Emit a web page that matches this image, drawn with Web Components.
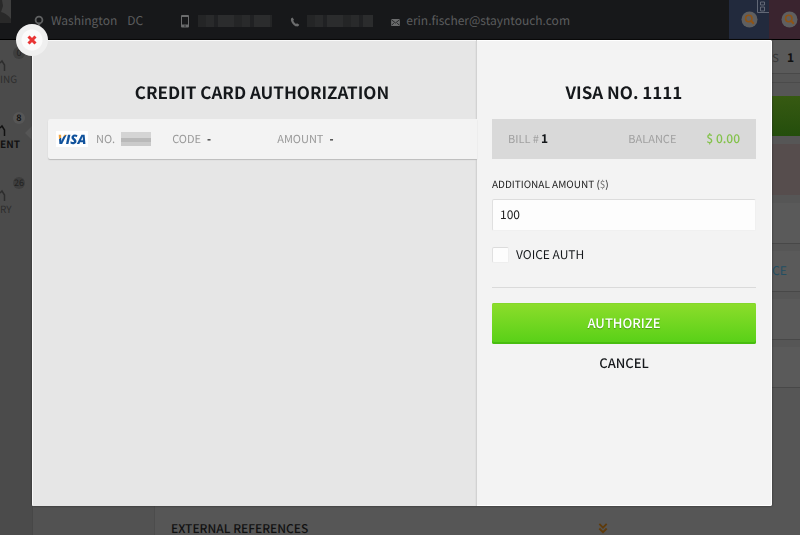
<!DOCTYPE html>
<html lang="en">
<head>
<meta charset="utf-8">
<meta name="viewport" content="width=device-width, initial-scale=1">
<title>Credit Card Authorization</title>
<style>
  html, body {height: 100%; margin: 0;}
  body {
    overflow: hidden;
    background: #565656;
    color: #15181b;
    font: 12px/16px "Noto Sans CJK JP", "Open Sans", sans-serif;
    text-rendering: geometricPrecision;
  }
</style>
</head>
<body>
<stay-app>
  <guest-bar slot="header" city="Washington" state="DC" email="erin.fischer@stayntouch.com"></guest-bar>
  <nav-item slot="nav" count="0">ING</nav-item>
  <nav-item slot="nav" count="8" active>ENT</nav-item>
  <nav-item slot="nav" count="26">RY</nav-item>
  <section-heading slot="content">EXTERNAL REFERENCES</section-heading>
  <info-rail slot="rail"></info-rail>
</stay-app>

<auth-modal>
  <span slot="title">CREDIT CARD AUTHORIZATION</span>
  <card-row slot="cards" code="-" amount="-"></card-row>
  <span slot="card">VISA NO. 1111</span>
  <bill-summary slot="form" bill="1" balance="$ 0.00"></bill-summary>
  <auth-form slot="form" amount="100"></auth-form>
</auth-modal>

<script>
// page frame behind the modal
window.customElements.define('stay-app', class extends HTMLElement {
  constructor(){
    super();
    const shadow = this.attachShadow({mode: 'open'});
    shadow.innerHTML = `
    <style>
      :host {display: flex; flex-direction: column; height: 100vh;}
      .body {
        flex: 1;
        display: grid;
        grid-template-columns: 32px 123px 1fr 28px;
        min-height: 0;
      }
      nav {background: #4b4b4b; padding-top: 4px;}
      .sub {background: #525252; border-right: 1px solid #4c4c4c; border-left: 1px solid #474747;}
      main {display: flex; flex-direction: column; justify-content: flex-end; padding: 0 16px;}
      aside {min-width: 0;}
    </style>
    <slot name="header"></slot>
    <div class="body">
      <nav><slot name="nav"></slot></nav>
      <div class="sub"></div>
      <main><slot name="content"></slot></main>
      <aside><slot name="rail"></slot></aside>
    </div>
    `;
  }
});

window.customElements.define('guest-bar', class extends HTMLElement {
  constructor(){
    super();
    const shadow = this.attachShadow({mode: 'open'});
    shadow.innerHTML = `
    <style>
      :host {
        display: flex;
        height: 39px;
        background: #17181a;
        border-bottom: 1px solid #000;
        color: #5c5d5e;
      }
      .avatar {width: 11px; height: 23px; background: #3f3f3f; flex: none;}
      .info {flex: 1; display: flex; align-items: center; padding: 2px 0 0 23px;}
      .info svg {flex: none;}
      .pin {margin-right: 7px;}
      .state {margin: 0 38px 0 10px;}
      .mobile {margin: 2px 9px 0 0;}
      .handset {margin: 2px 7px 0 18px;}
      .mail {margin: 3px 6px 0 18px;}
      a {color: inherit; text-decoration: none;}
      .masked {
        height: 12px;
        background: repeating-linear-gradient(90deg, #242526 0 8px, #292a2b 8px 16px, #202123 16px 20px, #2b2c2d 20px 36px);
      }
      .m1 {width: 74px;}
      .m2 {width: 66px;}
      .tab {
        width: 40px;
        display: flex;
        justify-content: center;
        border: 0;
        padding: 11px 0 0;
        background: #222a3d;
        align-items: flex-start;
        position: relative;
        overflow: hidden;
      }
      .tab.red {width: 31px; padding-left: 10px; background: #3a242f;}
      .glyph {position: absolute; right: 0; top: 0;}
    </style>
    <div class="avatar"><svg width="11" height="23"><path d="M0 0h2l1 6-2 6c4 1 8 4 10 7v4H0z" fill="#292929"/></svg></div>
    <div class="info">
      <svg class="pin" width="10" height="12" viewBox="0 0 10 12"><circle cx="5" cy="5" r="3.4" fill="none" stroke="#606162" stroke-width="1.8"/><path d="M3 8h4l-2 4z" fill="#606162"/></svg>
      <span>${this.getAttribute('city')}</span>
      <span class="state">${this.getAttribute('state')}</span>
      <svg class="mobile" width="8" height="13" viewBox="0 0 8 13"><path fill="#6b6c6d" fill-rule="evenodd" d="M1 0h6q1 0 1 1v10.500q0 1-1 1H1q-1 0-1-1V1q0-1 1-1zM1 2v7.500h6V2zM3.300 10.500v1h1.400v-1z"/></svg>
      <span class="masked m1"></span>
      <svg class="handset" width="10" height="10" viewBox="0 0 10 10"><path d="M2.500.5L1 1.500C.3 3.500 2 6.500 4 8.200c1.800 1.400 3.600 1.400 4.500.8L9.300 7.800 7 6.300 6 7.100C4.800 6.400 3.700 5 3.300 3.600L4 2.800z" fill="#6b6c6d"/></svg>
      <span class="masked m2"></span>
      <svg class="mail" width="9" height="7" viewBox="0 0 10 8"><rect width="10" height="8" rx="1" fill="#6b6c6d"/><path d="M.5 1L5 4.500 9.500 1M.7 7l2.600-2.600M9.300 7L6.700 4.400" fill="none" stroke="#17181a" stroke-width=".9"/></svg>
      <a href="mailto:${this.getAttribute('email')}">${this.getAttribute('email')}</a>
    </div>
    <button class="tab" aria-label="Search reservations">
      ${this.lens()}
      <svg class="glyph" width="12" height="13"><path d="M.5 0v12.500H12M3.500 2h4v3h-4zM3.500 7h4v4h-4z" fill="none" stroke="#626876"/></svg>
    </button>
    <button class="tab red" aria-label="Search guests">${this.lens()}</button>
    `;
  }
  lens() {
    return `<svg width="17" height="17" viewBox="0 0 17 17"><circle cx="8.500" cy="8.500" r="8" fill="#5f5f60"/><circle cx="7.800" cy="7.500" r="3.200" fill="none" stroke="#8f5314" stroke-width="1.500"/><path d="M10 9.800l2.800 2.900" stroke="#8f5314" stroke-width="2"/></svg>`;
  }
});

window.customElements.define('nav-item', class extends HTMLElement {
  constructor(){
    super();
    const active = this.hasAttribute('active');
    const shadow = this.attachShadow({mode: 'open'});
    shadow.innerHTML = `
    <style>
      :host {display: block; height: 65px; position: relative; color: ${active ? '#111' : '#2d2d2d'};}
      a {display: flex; flex-direction: column; color: inherit; text-decoration: none; font-size: 10px; font-weight: ${active ? 700 : 400};}
      .badge {
        align-self: flex-end;
        width: 12px;
        height: 12px;
        margin: 3px 7px 0 0;
        border-radius: 50%;
        background: ${active ? '#565656' : '#3e3e3e'};
        color: ${active ? '#111' : '#222'};
        font-size: 9px;
        line-height: 12px;
        text-align: center;
      }
      svg {display: block;}
      .label {line-height: 14px;}
      .arrow {
        display: ${active ? 'block' : 'none'};
        position: absolute;
        right: 0;
        top: 17px;
        border: 7px solid transparent;
        border-left: 0;
        border-right-color: #565656;
      }
    </style>
    <a href="#">
      <span class="badge">${this.getAttribute('count')}</span>
      <svg width="8" height="13" viewBox="0 0 8 13"><path d="M0 4l2-2 2.500 4v6M0 4" fill="none" stroke="currentColor" stroke-width="1.500"/></svg>
      <span class="label"><slot></slot></span>
    </a>
    <span class="arrow"></span>
    `;
  }
});

window.customElements.define('section-heading', class extends HTMLElement {
  constructor(){
    super();
    const shadow = this.attachShadow({mode: 'open'});
    shadow.innerHTML = `
    <style>
      :host {display: grid; grid-template-columns: 73fr 27fr; align-items: start; color: #111;}
      h2 {margin: 0; font-size: 12px; line-height: 12px; font-weight: 500;}
      button {border: 0; padding: 0; background: none; justify-self: start;}
      svg {display: block;}
    </style>
    <h2><slot></slot></h2>
    <button aria-label="Expand"><svg width="10" height="11" viewBox="0 0 10 12"><path d="M1 1l4 4 4-4M1 6l4 4 4-4" fill="none" stroke="#5f3b0b" stroke-width="2"/></svg></button>
    `;
  }
});

window.customElements.define('info-rail', class extends HTMLElement {
  constructor(){
    super();
    const shadow = this.attachShadow({mode: 'open'});
    shadow.innerHTML = `
    <style>
      :host {display: flex; flex-direction: column;}
      .count {
        display: flex;
        justify-content: flex-end;
        align-items: center;
        gap: 8px;
        height: 31px;
        padding: 2px 6px 0 0;
        border-bottom: 1px solid #494949;
        background: #5a5a5a;
        color: #373737;
      }
      .count span {font-size: 11px;}
      .count b {color: #111;}
      .strip {height: 8px; border-bottom: 1px solid #4b4b4b;}
      .action {height: 40px; margin-top: 13px; border: 0; padding: 0; background: linear-gradient(#375a12, #244e0c);}
      .alert {height: 51px; margin: 8px 0; background: #564d4d;}
      .row {height: 40px; margin-bottom: 7px; border-bottom: 1px solid #484848; background: #5a5a5a; display: flex; align-items: center;}
      a {color: #234f63; text-decoration: none;}
    </style>
    <div class="count"><span>RS</span><b>1</b></div>
    <div class="strip"></div>
    <button class="action" aria-label="Check in"></button>
    <div class="alert"></div>
    <div class="row"></div>
    <div class="row"><a href="#">CE</a></div>
    <div class="row"></div>
    <div class="row"></div>
    `;
  }
});

window.customElements.define('auth-modal', class extends HTMLElement {
  constructor(){
    super();
    const self = this;
    const shadow = this.attachShadow({mode: 'open'});
    shadow.innerHTML = `
    <style>
      :host {
        display: flex;
        position: fixed;
        z-index: 1;
        inset: 0;
        padding: 40px 28px 29px 32px;
      }
      .sheet {
        flex: 1;
        display: grid;
        grid-template-columns: 3fr 2fr;
        position: relative;
        border-radius: 2px;
        background: #f3f3f3;
        box-shadow: 0 0 2px #222, inset 0 0 0 1px #fff;
      }
      .cards, .form {padding: 39px 16px 0; min-width: 0;}
      .cards {
        padding-right: 0;
        border-radius: 2px 0 0 2px;
        background: #e6e6e6;
        box-shadow: inset 1px 1px #f8f8f8, inset -1px 0 #e0e0e0, 1px 0 #d2d2d2;
      }
      h1 {
        margin: 0 0 14px;
        font-size: 17px;
        line-height: 26px;
        font-weight: 700;
        text-align: center;
      }
      .close {
        position: absolute;
        left: -16px;
        top: -16px;
        width: 32px;
        height: 32px;
        border: 0;
        padding: 0;
        border-radius: 50%;
        background: radial-gradient(#fbfbfb 10px, #f0f0f0 11px);
        cursor: pointer;
      }
      .close svg {display: block; margin: auto;}
    </style>
    <div class="sheet" role="dialog" aria-modal="true">
      <section class="cards">
        <h1><slot name="title"></slot></h1>
        <slot name="cards"></slot>
      </section>
      <section class="form">
        <h1><slot name="card"></slot></h1>
        <slot name="form"></slot>
      </section>
      <button class="close" aria-label="Close"><svg width="10" height="10" viewBox="0 0 10 10"><path d="M1.500 1.500l7 7M8.500 1.500l-7 7" stroke="#e93535" stroke-width="3"/></svg></button>
    </div>
    `;

    shadow.querySelector('.close').addEventListener('click', () => self.close());
    self.addEventListener('modal-close', () => self.close());
  }
  close() {this.style.display = 'none'}
});

window.customElements.define('card-row', class extends HTMLElement {
  constructor(){
    super();
    const shadow = this.attachShadow({mode: 'open'});
    shadow.innerHTML = `
    <style>
      :host {
        display: flex;
        align-items: center;
        position: relative;
        height: 40px;
        margin-right: -1px;
        padding-left: 8px;
        border-radius: 2px 0 0 2px;
        background: #f3f3f3;
        box-shadow: 0 1px 1px #bbb;
        color: #999;
        font-size: 11px;
      }
      .visa {
        width: 32px;
        height: 16px;
        margin-right: 8px;
        background: #fff;
        text-align: center;
        font: italic 800 13px/16px "Open Sans", sans-serif;
      }
      .visa span {
        background: linear-gradient(150deg, #f0a23c 28%, #10529c 29%);
        -webkit-background-clip: text;
        background-clip: text;
        color: transparent;
      }
      .masked {width: 30px; height: 14px; margin: 0 21px 0 6px; background: linear-gradient(#d4d4d4 40%, #b9b9b9 41% 70%, #cacaca 71%);}
      .value {color: #222; margin-left: 6px; font-weight: 700;}
      .code {width: 105px;}
    </style>
    <span class="visa"><span>VISA</span></span>
    <span>NO.</span><span class="masked"></span>
    <span class="code">CODE<span class="value">${this.getAttribute('code')}</span></span>
    <span>AMOUNT<span class="value">${this.getAttribute('amount')}</span></span>
    `;
  }
});

window.customElements.define('bill-summary', class extends HTMLElement {
  constructor(){
    super();
    const shadow = this.attachShadow({mode: 'open'});
    shadow.innerHTML = `
    <style>
      :host {
        display: flex;
        align-items: center;
        height: 40px;
        padding: 0 16px;
        background: #d9d9d9;
        color: #a0a0a0;
        font-size: 11px;
      }
      b {color: #15181b; margin-left: 2px; font-size: 12px;}
      .label {margin-left: auto;}
      .total {margin-left: 30px; color: #84c24c; font-size: 12px; font-weight: 500;}
    </style>
    <span>BILL #</span><b>${this.getAttribute('bill')}</b>
    <span class="label">BALANCE</span><span class="total">${this.getAttribute('balance')}</span>
    `;
  }
});

window.customElements.define('auth-form', class extends HTMLElement {
  constructor(){
    super();
    const self = this;
    const shadow = this.attachShadow({mode: 'open'});
    shadow.innerHTML = `
    <style>
      :host {display: block;}
      form {display: flex; flex-direction: column; margin: 0; padding-top: 17px;}
      .amount {font-size: 10px; color: #222;}
      .amount span {color: #777;}
      input[type=text] {
        box-sizing: border-box;
        width: 100%;
        height: 32px;
        margin: 7px 0 16px;
        padding: 0 7px 2px;
        border: 1px solid #f0f0f0;
        border-top-color: #dcdcdc;
        border-left-color: #e0e0e0;
        border-radius: 2px;
        background: #fdfdfd;
        color: #222;
        font: inherit;
        text-rendering: inherit;
      }
      .check {display: flex; align-items: center; gap: 7px;}
      input[type=checkbox] {
        appearance: none;
        width: 17px;
        height: 16px;
        margin: 0;
        border: 1px solid #eee;
        border-top-color: #dcdcdc;
        border-left-color: #e0e0e0;
        border-radius: 2px;
        background: #fdfdfd;
      }
      input[type=checkbox]:checked {background: #6cc62c;}
      hr {width: 100%; height: 1px; margin: 24px 0 15px; border: 0; background: #dadada;}
      button {
        border: 0;
        padding: 0;
        font: inherit;
        font-weight: 500;
        font-size: 13px;
        text-rendering: inherit;
        cursor: pointer;
      }
      .submit {
        height: 41px;
        padding-bottom: 2px;
        border-radius: 2px;
        background: linear-gradient(#8ddd2b, #57d017);
        box-shadow: inset 0 1px #84d72b, inset 0 -2px #48bd10;
        color: #fff;
        text-shadow: 0 1px 1px #4a9a14;
      }
      .cancel {align-self: center; height: 38px; background: none; color: #15181b;}
    </style>
    <form>
      <label class="amount" for="amount">ADDITIONAL AMOUNT (<span>$</span>)</label>
      <input type="text" id="amount" value="${this.getAttribute('amount')}">
      <div class="check"><input type="checkbox" id="voice"><label for="voice">VOICE AUTH</label></div>
      <hr>
      <button class="submit">AUTHORIZE</button>
      <button class="cancel" type="button">CANCEL</button>
    </form>
    `;

    shadow.querySelector('form').addEventListener('submit', e => e.preventDefault());
    shadow.querySelector('.cancel').addEventListener('click', () => {
      self.dispatchEvent(new CustomEvent('modal-close', {bubbles: true, composed: true}));
    });
  }
});
</script>
</body>
</html>
